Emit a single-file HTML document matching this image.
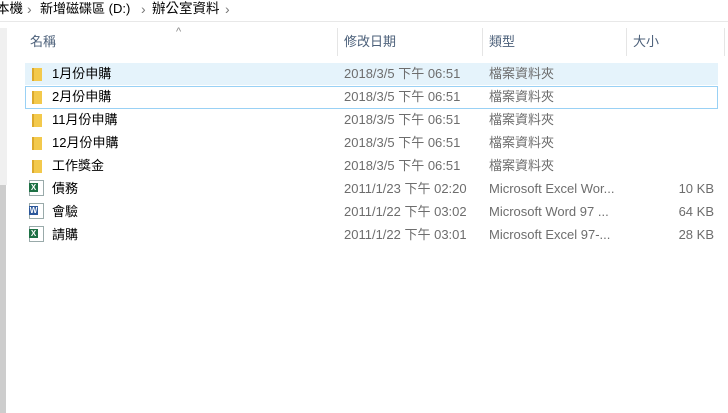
<!DOCTYPE html>
<html><head><meta charset="utf-8"><style>
body{margin:0;width:728px;height:413px;background:#fff;position:relative;overflow:hidden;font-family:"Liberation Sans","Noto Sans CJK TC",sans-serif;color:#000;font-size:13px;line-height:16px}
.a{position:absolute;white-space:nowrap}
.g{color:#6d6d6d}
.hd{color:#4c607a;font-size:13px}
.sep{position:absolute;top:28px;height:28px;width:1px;background:#e5e5e5}
.row{position:absolute;left:25px;width:693px;height:22px}
.fold{position:absolute;left:32px;width:10px;height:13px;background:#f3c94c;border-left:2px solid #dca92c;box-sizing:border-box}
.doc{position:absolute;left:29px;width:15px;height:16px;border:1px solid #9aa;box-sizing:border-box;background:#fff}
.doc b{position:absolute;left:-1px;top:2px;width:9px;height:9px;color:#fff;font-size:8px;line-height:9px;text-align:center;font-family:"Liberation Sans",sans-serif}
.ar{color:#777;position:absolute;top:1px;font-size:14px}
</style></head><body>
<div class="a" style="left:-4px;top:1px;font-size:13.5px">本機</div>
<div class="ar" style="left:27px">›</div>
<div class="a" style="left:40px;top:1px;font-size:13px">新增磁碟區 (D:)</div>
<div class="ar" style="left:141px">›</div>
<div class="a" style="left:152px;top:1px;font-size:13.5px">辦公室資料</div>
<div class="ar" style="left:225px">›</div>
<div class="a" style="left:0;top:21px;width:728px;height:1px;background:#e8e8e8"></div>
<div class="a" style="left:0;top:28px;width:7px;height:157px;background:#f0f0f0"></div>
<div class="a" style="left:0;top:185px;width:6px;height:228px;background:#cdcdcd"></div>
<div class="a" style="left:176px;top:24px;color:#888;font-size:11px">^</div>
<div class="a hd" style="left:30px;top:34px">名稱</div>
<div class="sep" style="left:337px"></div>
<div class="a hd" style="left:344px;top:34px">修改日期</div>
<div class="sep" style="left:482px"></div>
<div class="a hd" style="left:489px;top:34px">類型</div>
<div class="sep" style="left:626px"></div>
<div class="a hd" style="left:633px;top:34px">大小</div>
<div class="sep" style="left:724px"></div>
<div class="row" style="top:63px;background:#e5f3fb"></div>
<div class="row" style="top:86px;border:1px solid #99d1f5;box-sizing:border-box;height:23px"></div>

<div class="fold" style="top:68px"></div><div class="a" style="left:52px;top:66px">1月份申購</div><div class="a g" style="left:344px;top:66px">2018/3/5 下午 06:51</div><div class="a g" style="left:489px;top:66px">檔案資料夾</div>
<div class="fold" style="top:91px"></div><div class="a" style="left:52px;top:89px">2月份申購</div><div class="a g" style="left:344px;top:89px">2018/3/5 下午 06:51</div><div class="a g" style="left:489px;top:89px">檔案資料夾</div>
<div class="fold" style="top:114px"></div><div class="a" style="left:52px;top:112px">11月份申購</div><div class="a g" style="left:344px;top:112px">2018/3/5 下午 06:51</div><div class="a g" style="left:489px;top:112px">檔案資料夾</div>
<div class="fold" style="top:137px"></div><div class="a" style="left:52px;top:135px">12月份申購</div><div class="a g" style="left:344px;top:135px">2018/3/5 下午 06:51</div><div class="a g" style="left:489px;top:135px">檔案資料夾</div>
<div class="fold" style="top:160px"></div><div class="a" style="left:52px;top:158px">工作獎金</div><div class="a g" style="left:344px;top:158px">2018/3/5 下午 06:51</div><div class="a g" style="left:489px;top:158px">檔案資料夾</div>

<div class="doc" style="top:180px"><b style="background:#1e7145">X</b></div><div class="a" style="left:52px;top:181px">債務</div><div class="a g" style="left:344px;top:181px">2011/1/23 下午 02:20</div><div class="a g" style="left:489px;top:181px">Microsoft Excel Wor...</div><div class="a g" style="right:14px;top:181px">10 KB</div>
<div class="doc" style="top:203px"><b style="background:#2b579a">W</b></div><div class="a" style="left:52px;top:204px">會驗</div><div class="a g" style="left:344px;top:204px">2011/1/22 下午 03:02</div><div class="a g" style="left:489px;top:204px">Microsoft Word 97 ...</div><div class="a g" style="right:14px;top:204px">64 KB</div>
<div class="doc" style="top:226px"><b style="background:#1e7145">X</b></div><div class="a" style="left:52px;top:227px">請購</div><div class="a g" style="left:344px;top:227px">2011/1/22 下午 03:01</div><div class="a g" style="left:489px;top:227px">Microsoft Excel 97-...</div><div class="a g" style="right:14px;top:227px">28 KB</div>
</body></html>
